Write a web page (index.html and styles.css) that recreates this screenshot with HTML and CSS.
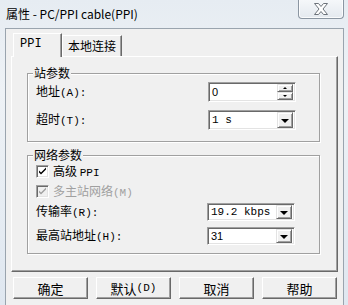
FILE: index.html
```html
<!DOCTYPE html>
<html>
<head>
<meta charset="utf-8">
<link rel="stylesheet" href="styles.css">
</head>
<body>
<div class="win">
  <div class="titlebar">
    <span class="title">属性 - PC/PPI cable(PPI)</span>
    <div class="close">
      <svg width="16" height="12" viewBox="0 0 16 12"><path d="M1.5 0.5h4l2.5 3 2.5-3h4l-4.5 5.5 4.5 5.5h-4l-2.5-3-2.5 3h-4l4.5-5.5z" fill="#fff" stroke="#6d737b" stroke-width="1"/></svg>
    </div>
  </div>
  <div class="client">
    <div class="tabs">
      <div class="tab active"><span class="lat">PPI</span></div>
      <div class="tab">本地连接</div>
    </div>
    <div class="panel">
      <div class="group g1">
        <span class="caption">站参数</span>
        <div class="row r1">
          <span class="label">地址<span class="lat">(A):</span></span>
          <div class="field">
            <span class="val sans">0</span>
            <div class="spin">
              <div class="sb"><i class="tri up"></i></div>
              <div class="sb"><i class="tri dn"></i></div>
            </div>
          </div>
        </div>
        <div class="row r2">
          <span class="label">超时<span class="lat">(T):</span></span>
          <div class="field">
            <span class="val lat">1 s</span>
            <div class="dd"><i class="tri big"></i></div>
          </div>
        </div>
      </div>
      <div class="group g2">
        <span class="caption">网络参数</span>
        <div class="check c1">
          <span class="box"><svg width="9" height="9" viewBox="0 0 9 9"><path d="M1 3.5l2 2 5-5v2l-5 5-2-2z" fill="#000"/></svg></span>
          <span class="ctext">高级 <span class="lat">PPI</span></span>
        </div>
        <div class="check c2 disabled">
          <span class="box"><svg width="9" height="9" viewBox="0 0 9 9"><path d="M1 3.5l2 2 5-5v2l-5 5-2-2z" fill="#a0a0a0"/></svg></span>
          <span class="ctext">多主站网络<span class="lat">(M)</span></span>
        </div>
        <div class="row r3">
          <span class="label">传输率<span class="lat">(R):</span></span>
          <div class="field short">
            <span class="val lat">19.2 kbps</span>
            <div class="dd"><i class="tri big"></i></div>
          </div>
        </div>
        <div class="row r4">
          <span class="label">最高站地址<span class="lat">(H):</span></span>
          <div class="field short">
            <span class="val sans">31</span>
            <div class="dd"><i class="tri big"></i></div>
          </div>
        </div>
      </div>
    </div>
    <div class="buttons">
      <div class="btn">确定</div>
      <div class="btn">默认<span class="lat">(D)</span></div>
      <div class="btn">取消</div>
      <div class="btn">帮助</div>
    </div>
  </div>
</div>
</body>
</html>
```
FILE: styles.css
```css
* { box-sizing: border-box; }
html, body { margin: 0; padding: 0; }
body {
  width: 348px;
  height: 305px;
  overflow: hidden;
  background: linear-gradient(180deg, #e6ecf2 0%, #eef2f6 30%, #dfe7f0 100%);
  font-family: "Noto Sans CJK SC", sans-serif;
  font-size: 12px;
  color: #000;
}
.win { width: 348px; height: 305px; }
.titlebar {
  height: 28px;
  display: flex;
  align-items: flex-start;
  padding-left: 6px;
}
.title {
  font-size: 12px;
  line-height: 14px;
  margin-top: 7px;
  color: #000;
}
.close {
  margin-left: auto;
  margin-right: 4px;
  margin-top: -1px;
  width: 46px;
  height: 20px;
  border: 1px solid #8b96a2;
  border-top: none;
  border-radius: 0 0 4px 4px;
  background: linear-gradient(180deg, #f6f8fa, #e4e9ef);
  box-shadow: inset 0 0 0 1px rgba(255,255,255,0.8);
  display: flex;
  align-items: center;
  justify-content: center;
}
.client {
  margin-left: 5px;
  width: 339px;
  height: 277px;
  border: 1px solid #9aa4ae;
  border-bottom: none;
  background: #f0f0f0;
  padding: 4px 5px 0 5px;
}
.lat { font-family: "Liberation Mono", monospace; font-size: 11px; }
.sans { font-family: "Liberation Sans", sans-serif; font-size: 11px; }
.tabs {
  display: flex;
  align-items: flex-end;
  height: 23px;
  padding-left: 2px;
  position: relative;
  z-index: 1;
}
.tab {
  height: 21px;
  width: 60px;
  background: #f0f0f0;
  border-left: 1px solid #fff;
  border-top: 1px solid #fff;
  border-right: 1px solid #696969;
  box-shadow: inset -1px 0 0 #a0a0a0;
  display: flex;
  align-items: center;
  justify-content: center;
  padding-bottom: 1px;
}
.tab.active {
  height: 24px;
  width: 49px;
  margin-bottom: -1px;
  padding-bottom: 4px;
  justify-content: flex-start;
  padding-left: 6px;
}
.tab.active .lat { font-size: 12px; }
.panel {
  width: 327px;
  height: 216px;
  border: 1px solid;
  border-color: #fff #696969 #696969 #fff;
  box-shadow: inset -1px -1px 0 #a0a0a0;
  padding: 0 17px 0 15px;
  display: flex;
  flex-direction: column;
}
.group {
  position: relative;
  border: 1px solid #a0a0a0;
  box-shadow: inset 1px 1px 0 #fff, 1px 1px 0 #fff;
  padding-left: 8px;
}
.caption {
  position: absolute;
  top: -7px;
  left: 5px;
  padding: 0 1px;
  background: #f0f0f0;
  line-height: 12px;
}
.g1 { margin-top: 16px; height: 69px; padding-top: 8px; }
.g2 { margin-top: 13px; height: 99px; padding-top: 9px; }
.row {
  display: flex;
  align-items: center;
  justify-content: space-between;
}
.r2 { margin-top: 8px; }
.r3 { margin-top: 5px; }
.r4 { margin-top: 6px; }
.label { line-height: 14px; }
.field {
  width: 88px;
  height: 20px;
  display: flex;
  align-items: center;
  background: #fff;
  border: 1px solid;
  border-color: #a0a0a0 #fff #fff #a0a0a0;
  box-shadow: inset 1px 1px 0 #696969, inset -1px -1px 0 #e3e3e3;
  padding: 2px 2px 2px 3px;
  margin-right: 23px;
}
.field.short { height: 18px; margin-right: 24px; }
.val { flex: 1; line-height: 14px; }
.spin {
  width: 16px;
  height: 16px;
  display: flex;
  flex-direction: column;
}
.sb, .dd {
  background: #f0f0f0;
  border: 1px solid;
  border-color: #e3e3e3 #696969 #696969 #e3e3e3;
  box-shadow: inset 1px 1px 0 #fff, inset -1px -1px 0 #a0a0a0;
  display: flex;
  align-items: center;
  justify-content: center;
}
.sb { height: 8px; }
.dd { width: 16px; height: 16px; }
.field.short .dd { height: 14px; }
.tri { display: block; width: 0; height: 0; }
.tri.big { border-left: 4px solid transparent; border-right: 4px solid transparent; border-top: 4px solid #000; margin-top: 1px; }
.tri.up { border-left: 2px solid transparent; border-right: 2px solid transparent; border-bottom: 2px solid #000; }
.tri.dn { border-left: 2px solid transparent; border-right: 2px solid transparent; border-top: 2px solid #000; }
.check {
  display: flex;
  align-items: center;
  height: 13px;
  gap: 4px;
}
.c2 { margin-top: 7px; }
.box {
  width: 13px;
  height: 13px;
  background: #fff;
  border: 1px solid;
  border-color: #a0a0a0 #fff #fff #a0a0a0;
  box-shadow: inset 1px 1px 0 #696969, inset -1px -1px 0 #e3e3e3;
  display: flex;
  align-items: center;
  justify-content: center;
}
.disabled .box { background: #f0f0f0; }
.disabled .ctext { color: #a0a0a0; }
.ctext { line-height: 13px; }
.buttons {
  display: flex;
  gap: 8px;
  padding-left: 2px;
  margin-top: 5px;
}
.btn {
  width: 75px;
  height: 22px;
  border: 1px solid;
  border-color: #fff #696969 #696969 #fff;
  box-shadow: inset -1px -1px 0 #a0a0a0;
  display: flex;
  align-items: center;
  justify-content: center;
  font-size: 13px;
}
.btn .lat { font-size: 11px; }
```
